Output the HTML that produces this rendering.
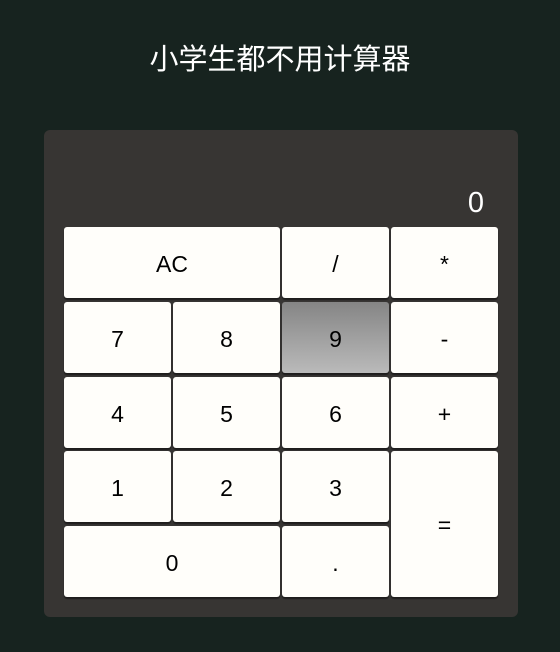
<!DOCTYPE html>
<html><head><meta charset="utf-8"><style>
html,body{margin:0;padding:0;}
body{width:560px;height:652px;background:#17231f;position:relative;overflow:hidden;font-family:"Liberation Sans","Noto Sans CJK SC",sans-serif;}
h1{position:absolute;top:38px;left:0;width:560px;text-align:center;margin:0;font-weight:normal;font-size:29px;color:#fff;line-height:44px;}
.panel{position:absolute;left:44px;top:130px;width:474px;height:487px;background:#373533;border-radius:6px;}
.disp{position:absolute;right:34px;top:53px;color:#fff;font-size:29px;line-height:40px;}
.b{position:absolute;background:#fffefa;border-radius:3px;box-shadow:0 2px 1px rgba(0,0,0,.45);display:flex;align-items:center;justify-content:center;font-size:23px;color:#000;box-sizing:border-box;padding-top:3px;}
.g{background:linear-gradient(#858585,#bababa);}
</style></head><body>
<h1>小学生都不用计算器</h1>
<div class="panel"><div class="disp">0</div></div>
<div class="b" style="left:64px;top:227px;width:216px;height:71px">AC</div>
<div class="b" style="left:282px;top:227px;width:107px;height:71px">/</div>
<div class="b" style="left:391px;top:227px;width:107px;height:71px">*</div>
<div class="b" style="left:64px;top:302px;width:107px;height:71px">7</div>
<div class="b" style="left:173px;top:302px;width:107px;height:71px">8</div>
<div class="b g" style="left:282px;top:302px;width:107px;height:71px">9</div>
<div class="b" style="left:391px;top:302px;width:107px;height:71px">-</div>
<div class="b" style="left:64px;top:377px;width:107px;height:71px">4</div>
<div class="b" style="left:173px;top:377px;width:107px;height:71px">5</div>
<div class="b" style="left:282px;top:377px;width:107px;height:71px">6</div>
<div class="b" style="left:391px;top:377px;width:107px;height:71px">+</div>
<div class="b" style="left:64px;top:451px;width:107px;height:71px">1</div>
<div class="b" style="left:173px;top:451px;width:107px;height:71px">2</div>
<div class="b" style="left:282px;top:451px;width:107px;height:71px">3</div>
<div class="b" style="left:391px;top:451px;width:107px;height:146px">=</div>
<div class="b" style="left:64px;top:526px;width:216px;height:71px">0</div>
<div class="b" style="left:282px;top:526px;width:107px;height:71px">.</div>
</body></html>
